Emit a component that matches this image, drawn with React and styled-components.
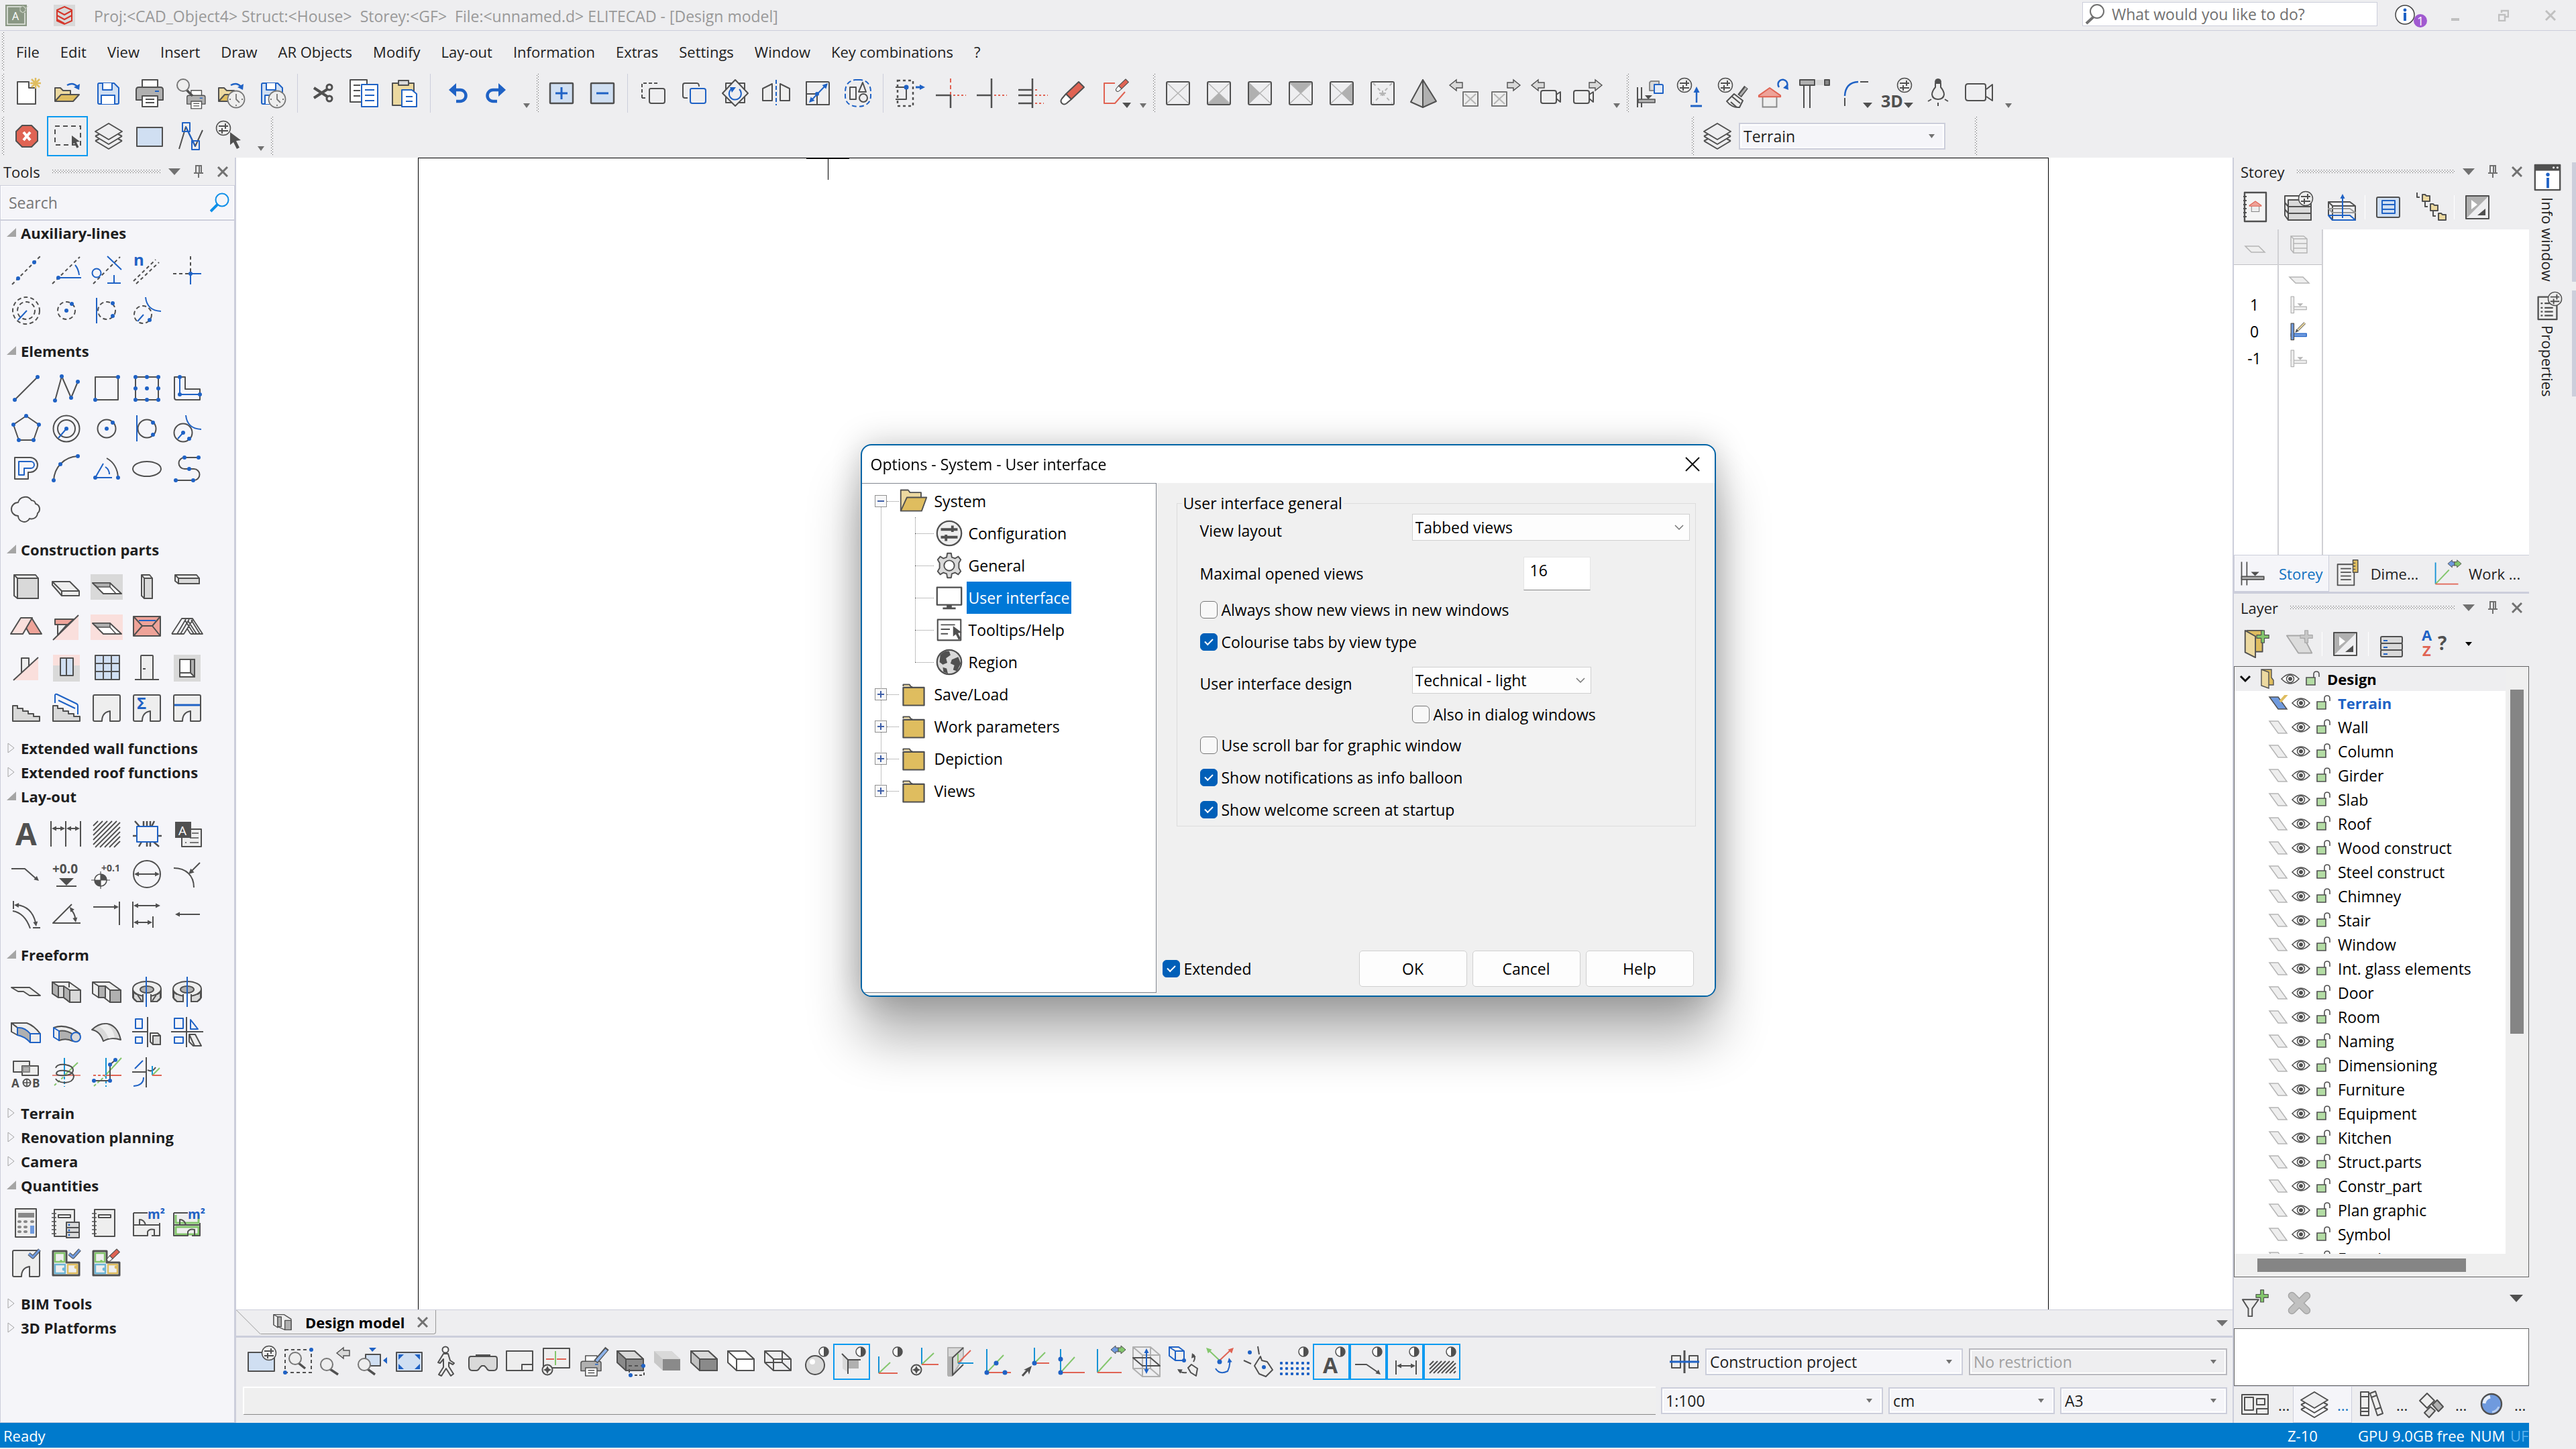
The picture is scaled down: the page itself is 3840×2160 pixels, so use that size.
import React, { Fragment, createElement, useState } from 'react';
import styled, { createGlobalStyle, css } from 'styled-components';

/* ---------- palette ---------- */
const K = '#505050';
const B = '#1f62c5';
const SKY = '#d0dff2';
const R = '#e06353';
const ROSE = '#eea399';
const BLUSH = '#fadfdc';
const G1 = '#eeeeee';
const G2 = '#d9d9d9';
const G3 = '#b0b0b0';
const Y1 = '#ecd9a0';
const Y2 = '#dfbd5f';
const GR = '#83c66c';
const CY = '#1592d6';
const LINE = '#cccedb';
const CHROME = '#eeeef0';
const PANEL = '#f5f5f9';

/* ---------- drawing helpers ---------- */
const g = (...els) => createElement(Fragment, null, ...els);
const l = (d, s = K, f = 'none', w = 2) => (
  <path d={d} stroke={s} fill={f} strokeWidth={w} strokeLinejoin="round" />
);
const fl = (d, f = K) => <path d={d} fill={f} />;
const da = (d, s = K, p = '5 4', w = 2) => (
  <path d={d} stroke={s} fill="none" strokeWidth={w} strokeDasharray={p} />
);
const ci = (x, y, r, s = K, f = 'none', w = 2) => (
  <circle cx={x} cy={y} r={r} stroke={s} fill={f} strokeWidth={w} />
);
const dots = (pts, r = 3) => (
  <g fill={B}>
    {pts.split(' ').map((p) => {
      const [x, y] = p.split(',');
      return <circle key={p} cx={x} cy={y} r={r} />;
    })}
  </g>
);
const head = (x, y, a, c = K, s = 7) => (
  <path d={`M0 0L${-s} ${-s / 2}V${s / 2}Z`} fill={c} transform={`translate(${x} ${y}) rotate(${a})`} />
);
const tx = (x, y, t, size, c = K, w = 700) => (
  <text x={x} y={y} fontSize={size} fill={c} fontWeight={w}>{t}</text>
);
const cfg = (x, y, r = 10.5) =>
  g(
    ci(x, y, r, K, G1, 1.5),
    l(`M${x - 7} ${y - 3}H${x + 7}M${x - 7} ${y + 4}H${x + 7}M${x + 3} ${y - 7}V${y + 1}M${x - 2} ${y}V${y + 8}`, K, 'none', 2)
  );
const clock = (x, y) =>
  g(ci(x, y, 12.5, '#777', G1, 1.8), l(`M${x} ${y - 8}V${y}L${x + 5} ${y + 5}M${x - 10} ${y}h2M${x + 10} ${y}h-2M${x} ${y + 10}v-2`, '#777', 'none', 1.8));
const half = (x = 37, y = 9) =>
  g(ci(x, y, 7, K, '#fff', 1.5), fl(`M${x} ${y - 7}A7 7 0 0 1 ${x} ${y + 7}Z`));
const lens = (x, y, ex, ey) => g(l(`M${x + 5} ${y + 7}L${ex} ${ey}`, K, 'none', 3.5), ci(x, y, 9, '#777', G1, 2));
const compass = (x, y) => g(ci(x, y, 7.5, K, G1, 2), fl(`M${x} ${y - 6}l2 4 4 2-4 2-2 4-2-4-4-2 4-2Z`));
const axes = (x, y, up, gx, gy, rx) =>
  g(l(`M${x} ${y}V${up}`, CY), l(`M${x} ${y}L${gx} ${gy}`, GR), l(`M${x} ${y}H${rx}`, R));
const fArrow = (x, y, dir, f = G2) => (
  <path d="M0 0L10 -8V-4H19V4H10V8Z" fill={f} stroke={K} strokeWidth="1.4" transform={`translate(${x} ${y}) scale(${dir} 1)`} />
);
const rubber = (t) => (
  <g transform={t} strokeLinejoin="round">
    <path d="M0 0L8 8L-11 26L-19 18Z" fill={R} stroke={K} strokeWidth="2" />
    <path d="M-19 18L-11 26L-18 32Q-22 35 -25 32Q-28 29 -25 25Z" fill="#fff" stroke={K} strokeWidth="2" />
  </g>
);
const dropTri = fl('M34 38H48L41 46Z');
const swap = (x, y) =>
  g(
    l(`M${x} ${y - 3}H${x - 4}V${y - 6}L${x - 11} ${y}L${x - 4} ${y + 6}V${y + 3}H${x}Z`, K, '#6f9ade', 1),
    l(`M${x} ${y - 3}H${x + 4}V${y - 6}L${x + 11} ${y}L${x + 4} ${y + 6}V${y + 3}H${x}Z`, K, GR, 1)
  );
const house = (x, y, s) => (
  <g transform={`translate(${x} ${y}) scale(${s})`}>
    <path d="M-11 12V30H11V12" fill={G1} stroke="#888" strokeWidth="2" />
    <path d="M-17 12L0 0L17 12V14H-17Z" fill={ROSE} stroke={R} strokeWidth="2" strokeLinejoin="round" />
  </g>
);

const floppy = g(l('M8 11Q8 9 10 9H32L39 16V38Q39 40 37 40H10Q8 40 8 38Z', B, SKY), l('M15 9V19H29V9M13 40V27H33V40', B, '#fff'));
const folderOpen = g(
  l('M5 36V16H13L17 20H28V26', K, Y1),
  l('M5 36L14 26H41L32 36Z', K, Y2)
);
const folderArrow = g(l('M23 12Q32 7 38 14', B, 'none', 2.5), fl('M41 19L42 10L33 15Z', B));
const printer = g(
  l('M13 15V4H36V15', K, '#fff'),
  l('M8 15H40Q44 15 44 19V34H4V19Q4 15 8 15Z', K, G3),
  l('M13 28H36V44H13Z', K, '#fff'),
  l('M18 33H31M18 38H31', K),
  l('M32 21H38', B)
);
const cube = (f1, f2, f3, s = K) =>
  g(
    l('M4 8H30L43 20V37H17L4 25Z', s, f2),
    l('M4 8H30L43 20H17Z', s, f1),
    l('M17 20H43V37H17Z', s, f3)
  );
const boxBase = (extra, stroke = '#b5b5b5') =>
  g(l('M8 9L40 39M40 9L8 39', stroke, 'none', 1.5), extra, l('M9 7H39Q41 7 41 9V39Q41 41 39 41H9Q7 41 7 39V9Q7 7 9 7Z', K));
const smallBox = (x) =>
  g(l(`M${x} 22H${x + 22}V43H${x}Z`, '#777', G1), l(`M${x + 3} 25L${x + 19} 40M${x + 19} 25L${x + 3} 40`, '#b5b5b5'));
const cam = (x, y) =>
  g(l(`M${x + 23} ${y + 6}L${x + 29} ${y + 2}V${y + 17}L${x + 23} ${y + 12}`, K, G1), l(`M${x + 3} ${y}H${x + 20}Q${x + 23} ${y} ${x + 23} ${y + 3}V${y + 16}Q${x + 23} ${y + 19} ${x + 20} ${y + 19}H${x + 3}Q${x} ${y + 19} ${x} ${y + 16}V${y + 3}Q${x} ${y} ${x + 3} ${y}Z`, K, G1));
const layers = g(
  l('M4 31L24 43L44 31M4 31L10 28M44 31L38 28'),
  l('M4 24L24 36L44 24M4 24L10 21M44 24L38 21'),
  l('M24 5L44 17L24 29L4 17Z', K, CHROME)
);
const pointer = (x, y, s = 1) => (
  <path d="M0 0L16 12L9 13L14 23L10 25L5 15L0 19Z" fill={K} transform={`translate(${x} ${y}) scale(${s})`} />
);
const opening = (bg) =>
  g(
    fl('M0 5H48V43H0Z', bg),
    l('M3 18H29L46 34H19Z', K, '#fff'),
    l('M3 18H29V24H10Z', K, G3, 1.6),
    l('M29 24L38 34', K, 'none', 1.6)
  );
const room = l('M6 5H42Q44 5 44 7V42Q44 44 42 44H29V29Q17 31 17 44H6Q4 44 4 42V7Q4 5 6 5Z', K, G1);
const stairs = l('M4 21H11V25H19V29H27V33H35V37H44V44H4Z', K, G2);
const ring = g(
  l('M3 20V32Q5 36 9 38H18V28M45 20V32Q43 36 39 38H30V28', K, G1),
  l('M18 27H8L4 24V33L9 38H18ZM30 27H40L44 24V33L39 38H30Z', K, G2),
  <ellipse cx="24" cy="19" rx="21" ry="11" fill={G1} stroke={K} strokeWidth="2" />,
  <ellipse cx="24" cy="20" rx="10" ry="5" fill={G3} stroke={K} strokeWidth="2" />,
  fl('M17 28H31V34H17Z', PANEL),
  l('M18 27V38M30 27V38', K)
);
const book = g(l('M8 4H38V44H8Z', K, G1), l('M4 10H11M4 16H11M4 22H11M4 28H11M4 34H11M4 40H11', K, 'none', 1.6), l('M14 12H32V16H14Z', K, '#fff'));
const plan3 = g(
  l('M4 6H24V23H43V42H4Z', K, G1, 3),
  l('M7 9H21V22H7Z', GR, G1, 2.4),
  l('M7 26H22V39H7Z', '#6cb5d6', G1, 2.4),
  l('M26 26H40V39H26Z', Y2, G1, 2.4),
  ci(16, 21, 2, 'none', GR),
  ci(20, 33, 2.4, 'none', '#6cb5d6'),
  ci(38, 30, 2.4, 'none', Y2)
);
const tick = l('M28 10L34 15L44 4', K, 'none', 5);
const tickBlue = l('M28 10L34 15L44 4', '#6f9ade', 'none', 3);
const house2 = g(l('M4 9H25M43 24V43H31M4 9V43H25V37Q28 32 35 34V43M4 27H43M13 27V19Q20 19 22 27', K, 'none'));
/* diagonal strokes, each one trimmed to the given rectangle */
const hatch = (x0, y0, x1, y1, step) => {
  const h = y1 - y0;
  let d = '';
  for (let a = x0 - h + step; a < x1; a += step) {
    const sx = Math.max(a, x0);
    const ex = Math.min(a + h, x1);
    if (ex - sx > 2) d += `M${sx} ${y1 - (sx - a)}L${ex} ${y1 - (ex - a)}`;
  }
  return d;
};

/* ---------- icon library (48 x 48) ---------- */
const ICONS = {
  fileNew: g(l('M10 7H27V16H37V40H10Z', K, '#fff'), l('M37 1V17M29 9H45M31 3L43 15M43 3L31 15', Y2, 'none', 2.5)),
  open: g(folderOpen, folderArrow),
  save: floppy,
  print: printer,
  preview: g(<g transform="translate(16 17) scale(0.68)">{printer}</g>, lens(13, 12, 27, 28)),
  openRecent: g(folderOpen, folderArrow, clock(31, 33)),
  saveTimed: g(floppy, clock(31, 33)),
  cut: g(l('M10 16L30 29M10 31L30 18', K, 'none', 4), ci(33, 15, 4, K, 'none', 3), ci(33, 32, 4, K, 'none', 3)),
  copy: g(
    l('M3 4H28V37H3Z', K, '#fff'), l('M8 12H18M8 20H18M8 28H18'),
    l('M20 11H44V44H20Z', B, '#fff'), l('M25 19H39M25 27H39M25 35H39', B)
  ),
  paste: g(l('M5 9H37V42H5Z', K, Y1), l('M14 5H29V12H14Z', K, G2), l('M19 19H34L41 25V44H19Z', B, '#fff'), l('M25 29H35M25 36H35', B)),
  undo: g(l('M20 19H30A8 8 0 0 1 30 36H24', B, 'none', 4.5), fl('M13 19L24 9V29Z', B)),
  redo: g(l('M28 19H18A8 8 0 0 0 18 36H24', B, 'none', 4.5), fl('M37 19L26 9V29Z', B)),
  plus: g(l('M8 9H40Q41 9 41 10V38Q41 39 40 39H8Q7 39 7 38V10Q7 9 8 9Z', K, SKY, 2.5), l('M24 15V33M15 24H33', B, 'none', 3)),
  minus: g(l('M8 9H40Q41 9 41 10V38Q41 39 40 39H8Q7 39 7 38V10Q7 9 8 9Z', K, SKY, 2.5), l('M15 24H33', B, 'none', 3)),
  dupSel: g(da('M7 31V9H31', K, '5 3'), da('M7 31H16'), l('M20 17H38Q41 17 41 20V36Q41 39 38 39H21Q18 39 18 36V19Q18 17 20 17Z', K, CHROME)),
  dup: g(l('M14 31H10Q7 31 7 28V12Q7 9 10 9H28Q31 9 31 14', K), l('M20 17H38Q41 17 41 20V36Q41 39 38 39H21Q18 39 18 36V19Q18 17 20 17Z', B, CHROME)),
  rotate: g(l('M10 9H38V38H10Z', K), l('M24 4L43 24L24 43L5 24Z', K, CHROME), l('M19 17A9 9 0 1 0 30 18', B), fl('M16 15H25L19 23Z', B)),
  mirror: g(l('M4 35V17L18 10V35Z', K, G1), l('M44 35V17L30 10V35Z', K, G1), da('M24 4V42', B, '6 3')),
  scale: g(l('M8 7H40Q42 7 42 9V41H8Z'), l('M8 25H24V41', K), l('M14 36L37 12', B), head(40, 9, -46, B, 8), head(12, 38, 134, B, 8), dots('24,25')),
  group: g(da('M24 4H28Q43 6 43 22V28Q43 43 24 44Q5 43 5 28V22Q5 6 20 4Z', B, '7 4'), l('M12 15H21V33H12ZM31 8L36 22H25Z', K), ci(32, 31, 6)),
  stretch: g(da('M7 5H30V43H7Z', K, '4 4', 2.5), l('M4 15H20V33H4'), dots('20,15', 3.5), l('M34 15H42', B, 'none', 3), head(48, 15, 0, B, 8)),
  trim1: g(l('M3 27H25V46', K, 'none', 2.5), da('M25 2V26', R, '6 4'), da('M29 27H48', R, '3 3')),
  trim2: g(l('M3 27H25M25 2V46', K, 'none', 2.5), da('M29 27H48', R, '3 3')),
  trim3: g(l('M4 19H25M4 27H25M4 39H25M25 2V46', K, 'none', 2.5), da('M29 27H48M29 39H42M29 19H34', R, '3 3')),
  eraser: rubber('translate(33 7)'),
  eraseSeg: g(l('M26 9H10V39H26L41 22', R), rubber('translate(42 3) scale(0.55)'), fl('M37 38H50L44 46Z')),
  vPlain: boxBase(null),
  vBottom: boxBase(fl('M24 24L40 40H8Z', G3)),
  vLeft: boxBase(fl('M24 24L8 40V8Z', G3)),
  vTop: boxBase(fl('M24 24L40 8H8Z', G3)),
  vRight: boxBase(fl('M24 24L40 40V8Z', G3)),
  vIso: g(da('M10 9L38 39M38 9L10 39', '#b5b5b5', '5 5'), l('M19 24H29M24 20V28', '#b5b5b5'), l('M9 7H39Q41 7 41 9V39Q41 41 39 41H9Q7 41 7 39V9Q7 7 9 7Z', K)),
  pyramid: g(l('M23 4L5 37L23 45Z', K, G2), l('M23 4L43 36L23 45Z', K, G3)),
  boxPrev: g(smallBox(22), fArrow(2, 12, 1)),
  boxNext: g(smallBox(4), fArrow(46, 12, -1)),
  camPrev: g(cam(16, 20), fArrow(2, 12, 1)),
  camNext: g(cam(4, 20), fArrow(46, 12, -1)),
  wallCopy: g(
    l('M3 15V45M9 15V45', K, 'none', 2), l('M4 33H29V38H4Z', K, G3, 1.6), fl('M14 27H25L19 33Z'),
    l('M23 6H35V20H21V8Z', '#888', G2), l('M28 11H39Q41 11 41 13V24H28Z', B, '#e3ebf8')
  ),
  cfgUp: g(cfg(12, 12), l('M30 38V20', B, 'none', 2.5), head(30, 14, -90, B, 9), l('M21 43H38', B, 'none', 3)),
  cfgBrush: g(cfg(12, 12), l('M43 15L33 28', K, 'none', 7), l('M43 16L34 27', G3, 'none', 3), l('M25 25L38 35L33 45Q22 46 14 36Z', K, G1), l('M22 29L34 39M20 37L29 45', K)),
  houseTurn: g(house(17, 16, 0.95), l('M31 15A7 7 0 1 1 41 16', B, 'none', 2.5), fl('M44 10L45 19L37 16Z', B)),
  column: g(fl('M1 4H23V12H1Z', G3), l('M1 4H23V12H1Z'), fl('M25 4H36V12H25Z', G2), l('M38 4H45V12H38Z', K, '#888'), l('M7 12V46M16 12V46')),
  fillet: g(l('M7 28Q8 8 27 7', B, 'none', 2.5), l('M30 7H42M7 31V43'), dropTri),
  view3d: g(tx(0, 45, '3D', 25), cfg(35, 12), dropTri),
  lamp: g(fl('M19 8Q19 2 24 2Q29 2 29 8Z'), l('M20 9H28V15Q33 21 33 26Q32 33 24 33Q16 33 15 26Q15 21 20 15Z', K, G1), l('M24 38V43M14 33L9 36M34 33L39 36')),
  video: g(l('M35 18L44 11V35L35 29', K), l('M8 10H31Q34 10 34 13V32Q34 35 31 35H8Q4 35 4 31V14Q4 10 8 10Z', K)),

  cancel: g(l('M17 8H31L40 17V31L31 40H17L8 31V17Z', K, R), l('M19 18L29 30M29 18L19 30', '#fff', 'none', 4)),
  pick: g(da('M5 9H43V37H5Z', K, '7 5'), pointer(30, 23, 0.75)),
  layers,
  area: l('M5 11H43V39H5Z', K, SKY),
  poly: g(l('M7 43L17 10L31 39L42 15'), l('M17 10L31 39', B), l('M12 4H23V17H12ZM26 31H37V44H26Z', B)),
  cfgPick: g(cfg(12, 12), pointer(22, 18, 1)),

  auxLine: g(da('M3 45L45 3'), dots('12,36 36,12')),
  auxAngle: g(da('M3 44L44 4'), l('M12 35H46M37 16Q42 22 43 31', B), dots('12,35')),
  auxPerp: g(da('M4 44L44 4'), l('M25 3L46 23M25 43H45M35 31V43', B), ci(9, 28, 6.5, B)),
  auxPar: g(tx(4, 17, 'n', 24, B), da('M4 40L37 8M8 44L42 12')),
  auxCross: g(da('M3 29H28M29 3V28'), l('M29 45V29H45', B), dots('29,29')),
  auxRings: g(<g strokeDasharray="6 4">{ci(24, 24, 20)}{ci(24, 24, 13)}</g>, l('M25 24L12 38', B)),
  auxCircle: g(<g strokeDasharray="6 4">{ci(24, 24, 13)}</g>, dots('24,24 32,14')),
  auxTan: g(<g strokeDasharray="6 4">{ci(24, 24, 13)}</g>, l('M9 5V43', B), dots('33,13 33,32')),
  auxArc: g(<g strokeDasharray="6 4">{ci(18, 30, 13)}</g>, l('M22 4Q24 24 45 25M19 30L10 40', B), dots('28,38')),

  line: g(l('M7 41L41 7'), dots('7,41 41,7')),
  pline: g(l('M7 42L17 6L31 38L41 14'), dots('7,42 17,6 31,38 41,14')),
  rect: g(l('M7 7H41V41H7Z'), dots('7,41 41,7')),
  rect9: g(l('M7 7H41V41H7Z'), dots('7,7 24,7 41,7 7,24 24,24 41,24 7,41 24,41 41,41')),
  lshape: g(l('M5 7H21V25H43V41H8Q5 41 5 38Z'), l('M13 7V33H43', B), dots('13,7 13,33 43,33')),
  penta: g(l('M24 5L43 18L35 41H13L5 18Z'), dots('24,5 43,18 35,41 13,41 5,18')),
  rings: g(ci(24, 24, 19.5), ci(24, 24, 13), l('M24 24L12 38', B), dots('24,24')),
  circle: g(ci(24, 24, 13.5), dots('24,24 33,15')),
  circleTan: g(ci(24, 24, 13.5), l('M9 4V43', B), dots('33,15 33,33')),
  circleArc: g(ci(18, 30, 13.5), l('M22 4Q24 24 45 25M18 30L10 39', B), dots('18,30 27,39')),
  pshape: g(l('M7 7H30A11 11 0 0 1 30 29H27V39H7Z'), l('M13 13H31A5 5 0 0 1 31 23H21V33H13Z', B)),
  arc: g(l('M5 41C6 22 20 6 41 5'), dots('5,41 15,17 41,5')),
  arcAngle: g(l('M24 8Q40 17 41 37'), l('M19 16L7 37H32M22 21Q28 25 28 32', B), dots('7,37 41,37')),
  ellipse: <ellipse cx="24" cy="24" rx="21" ry="11" fill="none" stroke={K} strokeWidth="2" />,
  spline: g(l('M41 7H20A8.5 8.5 0 0 0 20 24H34A8.5 8.5 0 0 1 34 41H7'), dots('41,7 20,7 27,24 33,41 7,41')),
  cloud: l('M12 14A11 11 0 0 1 32 11A6 6 0 0 1 38 16A8 8 0 0 1 41 30A9 9 0 0 1 29 38A9 9 0 0 1 12 34A10 10 0 0 1 12 14Z'),

  wall: g(l('M6 6H38L42 11V41H11L6 37Z', K, G1), l('M6 6L11 11V41M11 11H42', K), l('M11 11H42V41H11Z', K, G2)),
  slab: g(l('M3 16H29L43 30V37H17L3 21Z', K, G1), l('M3 16L17 30H43M17 30V37')),
  opening: opening(G2),
  pillar: g(l('M16 6H28L32 11V41H20L16 37Z', K, G1), l('M16 6L20 11'), l('M20 11H32V41H20Z', K, G2)),
  beam: g(l('M6 6H38L42 11V19H11L6 15Z', K, G1), l('M6 6L11 11'), l('M11 11H42V19H11Z', K, G2)),
  roof: g(l('M32 10L47 34H29L24 25Z', K, ROSE), l('M1 34L16 10H33L19 34Z', K, BLUSH)),
  roofEdge: g(fl('M4 43H42V6Z', BLUSH), l('M11 20V36L25 20Z', K, G1), l('M7 12H35L26 20H7Z', K, ROSE), l('M4 43L42 6')),
  roofOpening: opening(BLUSH),
  hip: g(l('M4 8H44V37H4Z', K, ROSE), l('M4 8L17 22H32L44 8M17 22L4 37M32 22L44 37', K), l('M12 14H37', B)),
  rafters: g(l('M1 34L16 11H32L47 34H38L25 14M1 34H19L33 12M9 34L22 12M14 34L27 12M29 34L24 26M34 34L21 14M29 34H43L30 13', K, 'none', 1.8)),
  chimney: g(fl('M5 43H42V9Z', BLUSH), l('M17 32V10H28V23', K, G1), l('M5 43L42 9')),
  window: g(fl('M4 5H44V21H4Z', BLUSH), fl('M4 21H44V45H4Z', G2), l('M15 10H34V36H15ZM24 10V36', K, SKY)),
  glass: g(l('M7 6H43V42H7Z', K, SKY), l('M19 6V42M31 6V42M7 18H43M7 30H43')),
  door: g(l('M15 42V7Q15 6 16 6H32Q33 6 33 7V42', K, G1), l('M6 42H42M18 26H22')),
  niche: g(fl('M4 5H44V45H4Z', G2), l('M13 12H35V38H13Z', K, '#fff'), l('M29 12V32L35 38V12Z', K, G3), l('M13 32H29')),
  stairs,
  railing: g(stairs, l('M7 17V5Q8 3 10 4L39 18Q41 19 41 21V34M12 13L37 25', B)),
  room,
  roomSum: g(room, tx(9, 26, 'Σ', 24, B)),
  roomBand: g(room, l('M5 20H43', B, 'none', 3)),

  text: tx(8, 41, 'A', 46),
  dims: g(l('M1 5V43M23 5V43M45 5V43M5 16H19M27 16H41'), head(2, 16, 180), head(22, 16, 0), head(24, 16, 180), head(44, 16, 0)),
  hatch: l(hatch(4, 5, 44, 44, 7), K, 'none', 1.8),
  detail: g(l('M6 5L13 13M19 5V13M24 5V13M29 5V13M35 5L31 13M12 43L16 36M24 43V36M29 43V36M34 36L42 43M3 27H9M40 27H46', K, 'none', 2.5), l('M9 13H40V36H9Z', B, PANEL)),
  label: g(l('M16 17H45V43H16Z', K, G1), l('M31 23H41M28 30H41M28 37H41M21 37H23', K, 'none', 1.6), fl('M6 6H30V30H6Z'), tx(11, 26, 'A', 19, '#fff', 400)),
  leader: g(l('M2 16H22L39 31'), head(43, 34, 40)),
  level: g(tx(3, 23, '+0.0', 19), fl('M13 30H35L24 41Z'), l('M9 42H39')),
  levelPoint: g(tx(16, 20, '+0.1', 14), ci(15, 33, 9, K, '#fff', 1.6), fl('M15 33V24A9 9 0 0 1 24 33ZM15 33V42A9 9 0 0 1 6 33Z'), l('M1 33H29M15 20V46', K, 'none', 1.2)),
  diameter: g(ci(24, 24, 20), l('M9 24H39'), head(5, 24, 180), head(43, 24, 0)),
  radius: g(l('M4 15C22 15 34 26 34 44M43 7L30 20'), head(26, 24, 138, K, 8)),
  arcDim: g(l('M4 19Q22 22 30 45M10 10Q32 12 38 36M5 4V16M34 44H45'), head(6, 10, 185), head(39, 42, 80)),
  angleDim: g(l('M32 9L4 37H45M31 17Q37 24 37 30'), head(29, 13, 235), head(38, 36, 80)),
  endDim: g(l('M4 13H36M43 5V40'), head(42, 13, 0)),
  baseDim: g(l('M3 5V44M8 11H38M8 36H27M33 27V44'), head(4, 11, 180), head(44, 11, 0), head(4, 36, 180), head(32, 36, 0)),
  arrow: g(l('M12 24H43'), head(6, 24, 180)),

  face: l('M2 17H29L45 29H29L20 23H12Z', K, G1),
  extrudeOpen: g(l('M3 9H28L45 21V39H29L20 32H12L3 26Z', K, G1), l('M3 9L12 15V32L3 26Z', K, G3), l('M12 15H20V32H12Z', K, G2), l('M20 15L29 21V39L20 32Z', K, G3), l('M29 21H45V39H29Z', K, G2), l('M28 9V17')),
  extrude: g(l('M3 9H28L45 21V39H29L20 32H12L3 26Z', K, G1), l('M12 15H22V32H12Z', K, G3), l('M3 9L12 15H22L29 21V39M22 15V32'), l('M29 21H45V39H29Z', K, G3)),
  revolveOpen: g(ring, l('M10 28L16 37M38 28L32 37', K), l('M23 1V46', B)),
  revolve: g(ring, l('M24 1V46', B)),
  sweep: g(l('M2 10H25Q36 14 45 26H30Q22 18 11 17Z', K, G1), l('M2 10L11 17V28L2 23Z', K, G1), l('M11 17Q22 16 30 26V39Q22 30 11 28Z', B, G3), l('M30 26H45V39H30Z', B, G1)),
  loft: g(l('M5 17Q24 10 44 26L36 34Q24 24 12 25Z', K, G1), l('M12 22Q24 20 34 27L33 37Q24 32 13 36Z', K, G3), l('M5 17L13 22V36L5 31Z', B, G1), ci(38, 31, 7, B, G2)),
  surface: g(l('M2 20Q12 10 24 11Q40 13 45 35Q30 30 19 37Q14 22 2 20Z', K, G2), fl('M13 15Q20 11 25 12Q34 19 36 32Q31 32 27 33Q22 20 13 15Z', G1)),
  views2: g(l('M25 1V46M2 23H25'), l('M7 4H17V18H7ZM7 31H17V40H7Z', B), l('M29 25H40L44 29V42H33L29 38Z', K, G1), l('M33 29H44V42H33Z', K, G2)),
  views4: g(l('M23 1V46M0 23H48'), l('M5 3H18V18H5ZM5 31H18V40H5ZM29 5V19H40Z', B), l('M27 27H36L45 44H33L27 38Z', K, G1), l('M27 27L35 44')),
  boolean: g(l('M5 7H29V23H5Z', K, G1), l('M18 14H42V28H18Z', K, G1), l('M19 15H29V23H19Z', '#888', G3), tx(2, 46, 'A', 17), tx(33, 46, 'B', 17), ci(25, 39, 5.5), l('M20 39H31M25 34V45', K, 'none', 1.6)),
  helix: g(l('M3 28H45', R, 'none', 1.6), l('M21 2V29', CY), da('M21 30V45', CY, '4 3'), l('M21 28L41 9', GR), da('M6 43L20 30', GR, '4 3'), l('M8 17Q10 11 22 12Q34 14 34 20Q34 27 22 28Q9 29 9 25Q10 20 22 21Q35 23 35 30Q34 38 22 39Q10 38 8 33')),
  path3d: g(da('M4 28H23', R, '4 3'), l('M23 28H46', R), l('M23 2V28', CY), da('M23 29V45', CY, '4 3'), l('M24 26L46 2', GR), da('M5 44L22 29', GR, '4 3'), l('M5 36H29V12L37 5'), dots('5,36 29,36 29,12 37,5')),
  project: g(l('M23 1V46M2 23H23'), l('M6 18L18 6M4 44Q19 43 19 31', B), l('M25 20Q32 24 37 16'), l('M32 28V14', CY), l('M32 28L43 17', GR), l('M32 28H46', R)),

  calc: g(l('M8 3H39V45H8Z', K, G1), fl('M12 9H36V16H12Z', '#888'), <g fill="#888">{[14, 23].map((x) => [22, 30, 37].map((y) => <ellipse key={`${x}${y}`} cx={x} cy={y} rx="3" ry="2" />))}<ellipse cx="33" cy="22" rx="3" ry="2" /></g>, fl('M30 28H36V40H30Z', '#6f9ade')),
  bookDb: g(<g transform="translate(-2 0)">{book}</g>, l('M24 23H43V46H24ZM24 31H43M24 38H43', K, G2), dots('28,27 28,35 28,42', 1.4)),
  book: <g transform="translate(-2 0)">{book}</g>,
  areaM2: g(fl('M4 9H43V43H4Z', G1), house2, tx(25, 18, 'm²', 19, B)),
  areaGreen: g(fl('M4 9H43V43H4Z', G1), l('M7 12V24H41V12M7 30H41V41H7Z', GR, 'none', 3), house2, tx(25, 18, 'm²', 19, B)),
  roomCheck: g(room, tick, tickBlue),
  planCheck: g(plan3, tick, tickBlue),
  planErase: g(plan3, rubber('translate(39 3) scale(0.55)')),

  viewCfg: g(l('M4 10H43V38H4Z', K, SKY), cfg(35, 11)),
  zoomWin: g(da('M4 6H43V40H4Z', K, '5 4'), lens(19, 19, 34, 34), dots('43,6 4,40')),
  zoomPrev: g(lens(11, 28, 28, 43), fArrow(26, 11, 1)),
  zoomObj: g(l('M14 13H36V30H14Z', K, SKY), lens(12, 28, 28, 43), fl('M19 3H30L24 9ZM46 17V27L40 22Z', B)),
  zoomAll: g(l('M5 10H43V38H5Z', K, SKY), fl('M8 13H16L8 21ZM40 13H32L40 21ZM8 35H16L8 27ZM40 35H32L40 27Z', B)),
  walk: g(ci(23, 6, 4.5, K, '#fff'), l('M20 12H27L30 22L36 26L34 28L28 25L28 31L35 42L31 45L24 34L17 45L13 43L20 32V20L15 26L12 25Z', K, G1)),
  goggles: g(fl('M13 13H35V17H13Z'), l('M6 16H42Q45 16 45 20V31Q45 37 40 37H34Q31 37 29 33L26 30H22L19 33Q17 37 14 37H8Q3 37 3 31V20Q3 16 6 16Z', K, G2)),
  sheet: l('M4 8H43V37H4ZM27 37V28H43', K, G1),
  origin: g(l('M4 4H43V33H4Z', K, G1), l('M22 8V29', GR), l('M8 20H20M24 20H38', R, 'none', 2), compass(10, 36)),
  printArea: g(<g transform="translate(2 12) scale(0.75)">{printer}</g>, l('M44 4L27 24', K, 'none', 7), l('M43 6L28 23', '#8db3ea', 'none', 4)),
  cubeDash: g(cube(G2, '#8a8a8a', '#8a8a8a'), da('M22 40V30H43', K, '5 4'), dots('43,30 24,44'), da('M30 44H44V40', K, '4 3')),
  cubeShade: cube(G2, '#c8c8c8', '#8a8a8a', 'none'),
  cubeLine: cube(G2, '#c0c0c0', '#8a8a8a'),
  cubeHidden: cube('#fff', '#fff', '#fff'),
  cubeWire: g(l('M4 8H30L43 20V37H17L4 25ZM4 8L17 20H43M17 20V37M4 25H30L43 37M30 8V25')),
  sphere: g(ci(24, 29, 14, K, G2), ci(20, 24, 4, 'none', '#fff'), half()),
  corner: g(fl('M10 12L18 22V40L10 34Z', G2), fl('M18 22H34V34H18Z', G3), l('M9 12L18 21V42M18 21H37', K), half()),
  axisSmall: g(axes(9, 41, 16, 26, 25, 37), half()),
  axisOrigin: g(axes(18, 28, 3, 36, 11, 43), compass(10, 36)),
  axisWall: g(l('M2 3H25V18L9 44H2Z', G3, G2), fl('M2 16H9V46H2Z', G3), l('M25 3L9 18V44L25 28', K), l('M17 26V12', GR), l('M17 26L36 7', R), l('M17 26H40', CY)),
  axis3: g(axes(5, 40, 5, 30, 14, 41), dots('5,40 19,26 32,40', 3.5)),
  axisPick: g(axes(21, 26, 3, 37, 10, 43), dots('21,26', 3.5), l('M3 45L11 36', K, 'none', 3), fl('M17 30L5 36L11 37L13 43Z')),
  axis2: g(axes(5, 40, 5, 26, 17, 41), dots('5,40 5,20', 3.5)),
  axisSwap: g(axes(5, 40, 5, 26, 17, 41), swap(36, 6)),
  slice: g(l('M3 2H29L43 14V46H17L3 34ZM3 2L17 14H43M17 14V46M3 34H29L43 46M29 2V34', G3), l('M3 18H29L43 30H17Z'), l('M23 8V38', B), head(23, 4, -90, B), head(23, 42, 90, B)),
  cubeGizmo: g(l('M2 2H16L24 8V22H11L2 15ZM2 2L11 8H24M11 8V22', B), dots('24,22'), l('M35 28L44 34L42 45L34 40L30 33Z', K, G1), l('M38 24Q42 18 38 13M28 40Q20 41 16 37'), head(36, 11, -110), head(14, 35, 210)),
  axisArc: g(l('M22 22L4 5', GR), l('M22 22L40 5', R), head(2, 3, -135, GR, 8), head(43, 3, -45, R, 8), dots('22,24', 3.5), l('M16 34Q22 44 34 38Q38 30 37 22', B), head(36, 18, -100, B)),
  tag: g(l('M24 1L26 13M3 22L14 27', K), dots('12,10'), l('M28 16L24 22L19 30L26 42L36 46L46 36L38 24L30 22Z', K, G1), dots('33,32')),
  grid: g(<g fill={B}>{[26, 34, 42].map((y) => [4, 12, 20, 28, 36, 44].map((x) => <rect key={`${x}-${y}`} x={x - 2} y={y - 2} width="4" height="4" rx="1" />))}</g>, half()),
  dText: g(tx(11, 41, 'A', 32), half()),
  dLead: g(l('M4 28H21L37 39'), head(42, 43, 40), half()),
  dDim: g(l('M10 22V43M40 22V43M15 30H35'), head(11, 30, 180), head(39, 30, 0), half()),
  dHatch: g(l(hatch(5, 23, 44, 41, 6), K, 'none', 2), half()),

  storeyBook: g(l('M8 2H40V45H8Z', K, '#f4f4f4', 2.4), l('M6 8H11M6 14H11M6 20H11M6 26H11M6 32H11M6 38H11'), house(24, 15, 0.52)),
  storeyCfg: g(l('M3 7H34L42 13V43H8L3 36Z', K, G1), l('M8 13H42V43H8Z', K, G2), l('M3 17L8 23H42M3 27L8 33H42'), cfg(34, 11)),
  storeyUp: g(l('M3 16H35L43 22V43H9L3 36ZM3 16L9 22H43M9 22V43'), l('M3 26H35L43 32H9Z', '#999'), l('M3 36H35L43 43H9Z', B), l('M24 40V10', B), head(24, 4, -90, B)),
  storeyList: g(l('M9 9H39Q41 9 41 11V37Q41 39 39 39H9Q7 39 7 37V11Q7 9 9 9Z', K, SKY), l('M15 14H34V33H15ZM15 20H34M15 27H34', B)),
  storeyTree: g(...[[2, 2], [14, 16], [26, 30]].map(([x, y]) => g(l(`M${x} ${y}V${y + 7}H${x + 4}`), l(`M${x + 8} ${y + 3}h4l2 2h5v8h-11Z`, K, Y1)))),
  contrast: g(fl('M7 7H41L7 41Z', G3), fl('M15 13L24 20L15 27Z', '#fff'), fl('M36 26V36H24Z'), l('M7 7H41V41H7Z', K)),
  storey: g(l('M4 4V44M13 4V44'), l('M4 29H42V34H4Z', K, G3), fl('M20 21H34L27 28Z')),
  storeyDim: g(l('M4 29H42V36H13', '#b5b5b5', G1), l('M5 5V44H12V5Z', '#b5b5b5', G1), fl('M20 21H34L27 28Z', '#b5b5b5')),
  storeyActive: g(l('M5 29H42V36H5Z', B, '#6f9ade', 2), l('M5 5V44H12V5Z', K, '#6f9ade', 2), l('M22 20L38 4', K, 'none', 6), l('M22 20L38 4', Y1, 'none', 3.5), fl('M15 27L18 18L24 23Z')),
  dimensions: g(l('M5 9H32V43H5Z', K, G1), l('M10 16H27M10 22H27M10 28H27M10 34H27'), l('M30 2H38V22H30Z', K, Y2, 1.6), l('M30 7H34M30 12H34M30 17H34', K, 'none', 1.4)),
  workAxes: g(axes(5, 41, 6, 27, 18, 42), swap(36, 8)),
  layerNew: g(l('M8 3H33V36H22', K, Y2), l('M6 3L22 12V45L6 37Z', K, Y1), l('M31 3H36V10H43V15H36V22H31V15H24V10H31Z', K, GR, 1.2)),
  planeNew: g(l('M3 11H28L42 38H21Z', '#a8a8a8', '#dcdcdc'), l('M31 3H36V10H43V15H36V22H31V15H24V10H31Z', '#a8a8a8', '#c8c8c8', 1.2)),
  server: g(...[13, 23, 33].map((y) => g(l(`M10 ${y}H38Q40 ${y} 40 ${y + 2}V${y + 8}Q40 ${y + 10} 38 ${y + 10}H10Q8 ${y + 10} 8 ${y + 8}V${y + 2}Q8 ${y} 10 ${y}Z`, K, G2), l(`M12 ${y + 6}H18`, B)))),
  sortAZ: g(tx(4, 19, 'A', 22, B), tx(5, 42, 'Z', 22, R), tx(28, 33, '?', 28)),
  filterNew: g(l('M3 19H28L18 33V45H12V33Z', K, G1), l('M31 4H36V11H43V16H36V23H31V16H24V11H31Z', K, GR, 1.2)),
  remove: g(
    <path d="M13 13L36 36M36 13L13 36" stroke="#a5a5a5" strokeWidth="12" strokeLinecap="round" />,
    <path d="M13 13L36 36M36 13L13 36" stroke="#c0c0c0" strokeWidth="9" strokeLinecap="round" />
  ),
  plot: g(l('M4 9H43V38H4Z', K, G1), l('M8 13H21V32H8ZM26 15H38V24H26ZM26 38V30H43', K)),
  library: g(l('M5 5H17V40H5ZM5 12H17M5 29H17M5 34H17', K, G1), l('M19 7L27 4L38 37L30 40ZM21 13L29 10M27 31L35 28', K, G1)),
  materials: g(l('M16 7L27 18L16 29L5 18Z', K, G1), l('M31 17L40 27L33 34L24 24Z', K, G3), l('M21 27L28 33L19 43L12 36Z', K, G2)),
  ball: g(ci(24, 23, 15, K, '#6f9ade', 2.4), l('M13 22Q14 14 22 12', '#e6eefb', 'none', 5), l('M35 27Q32 34 25 35', '#b8cef0', 'none', 3)),
  cut3: g(l('M5 15H18V33H5ZM31 15H44V33H31Z', K, G1), l('M24 7V41', K, 'none', 3), l('M2 24H46', B, 'none', 3)),
  infoWin: g(l('M4 4H43V43H4Z', K, '#fff', 2.4), fl('M4 4H43V13H4Z'), dots('24,19', 2.8), l('M24 24V40', B, 'none', 4), ci(33, 8, 1.6, 'none', '#fff'), ci(39, 8, 1.6, 'none', '#fff')),
  props: g(l('M9 10H38V45H9Z', K, G1, 2.4), l('M19 20H30M19 27H32M19 33H32M19 39H32M13 20H16M13 27H16M13 33H16M13 39H16', K, 'none', 2.5), cfg(35, 13)),
  model: g(l('M3 7H26L42 17V41H28L3 30Z', K, G1), l('M12 12V36L3 30V7Z', K, G1), l('M12 12H20V34H12Z', K, G3), l('M28 20H42V41H28Z', K, G3)),
  config: g(ci(24, 24, 19, K, G1, 2.4), l('M11 18H37M11 30H37M29 12V22M19 26V36', K, 'none', 4)),
  gear: g(
    l('M21 5H27L28 11L33 13L38 10L42 15L39 20V28L42 33L38 38L33 35L28 37L27 43H21L20 37L15 35L10 38L6 33L9 28V20L6 15L10 10L15 13L20 11Z', K, G2),
    ci(24, 24, 8, K, '#fff')
  ),
  screen: g(l('M5 8H43V35H5Z', K, '#fff', 2.4), fl('M20 35H28V39H34V42H14V39H20Z')),
  tips: g(l('M6 8H42V40H6Z', K, '#fff', 2.2), l('M11 16H33M11 23H25M11 30H22', K), pointer(30, 18, 0.85)),
  globe: g(ci(24, 24, 19, K, G2, 2.4), fl('M10 13Q16 6 24 7L26 13L19 18L21 25L14 28L9 24ZM28 20L38 16L42 26L36 38L30 36L32 29L26 26ZM14 32L20 34L22 42L15 39Z')),
  folder: g(l('M7 11V8H17L20 12H22', K, Y1), l('M7 13H41V42H7Z', K, Y2, 2.4)),
  folderBig: g(l('M3 40V6H15L18 10H36V18', K, Y1, 2), l('M3 40L13 18H45L37 40Z', K, Y2, 2)),
};

/* ---------- base ---------- */
const Global = createGlobalStyle`
  *, *::before, *::after { box-sizing: border-box; }
  body {
    margin: 0;
    background: ${CHROME};
    color: #1e1e1e;
    font: 23px/32px "Open Sans", "Noto Sans", "Liberation Sans", sans-serif;
    overflow: hidden;
  }
  button, input, select { font: inherit; color: inherit; }
  ul { list-style: none; margin: 0; padding: 0; }
`;
const Svg = styled.svg`
  width: ${(p) => p.$s || 48}px;
  height: ${(p) => p.$s || 48}px;
  flex: none;
  display: block;
  overflow: visible;
`;
const Icon = ({ n, s }) => (
  <Svg viewBox="0 0 48 48" $s={s} fill="none" aria-hidden="true">{ICONS[n]}</Svg>
);
const plainButton = css`
  border: 0;
  padding: 0;
  background: none;
  display: flex;
  align-items: center;
  justify-content: center;
`;

const App_ = styled.div`
  display: flex;
  flex-direction: column;
  height: 100vh;
  padding-bottom: 2px;
`;
const dotPattern = css`
  background-image: conic-gradient(from 270deg at 1px 1px, #666 90deg, transparent 0),
    conic-gradient(from 270deg at 1px 1px, #666 90deg, transparent 0);
  background-size: 4px 4px;
  background-position: 0 0, 2px 2px;
`;

/* ---------- title bar ---------- */
const TitleBar = styled.header`
  display: flex;
  align-items: center;
  height: 46px;
  flex: none;
  padding: 0 4px 0 8px;
  border-bottom: 1px solid ${LINE};
`;
const Logo = styled(Svg)`
  margin-right: ${(p) => p.$gap}px;
`;
const Title = styled.h1`
  margin: 0;
  flex: 1;
  font-size: 23px;
  font-weight: 400;
  line-height: 32px;
  color: #999;
  white-space: pre;
  padding-top: 2px;
`;
const AskBox = styled.label`
  display: flex;
  align-items: center;
  gap: 10px;
  width: 440px;
  height: 36px;
  padding-left: 3px;
  margin-right: 24px;
  margin-bottom: 3px;
  background: #fff;
  border: 1px solid ${LINE};
  input {
    flex: 1;
    border: 0;
    padding: 0;
    background: none;
    outline: 0;
    &::placeholder { color: #717171; opacity: 1; }
  }
`;
const WinButton = styled.button`
  ${plainButton}
  width: ${(p) => p.$w || 72}px;
  height: 40px;
`;

/* ---------- menu + toolbars ---------- */
const Bar = styled.div`
  display: flex;
  align-items: center;
  height: ${(p) => p.$h}px;
  flex: none;
  padding-left: 1px;
`;
const Grip = styled.span`
  width: 8px;
  height: 58px;
  flex: none;
  ${dotPattern}
  background-clip: content-box;
  padding: 0 2px;
`;
const MenuItem = styled.button`
  ${plainButton}
  padding: 0 16px 0 15px;
  height: 40px;
  font-size: 22px;
`;
const MenuList = styled.nav`
  display: flex;
`;
const Slot = styled.button`
  ${plainButton}
  width: ${(p) => p.$w || 61}px;
  height: ${(p) => p.$h || 60}px;
  flex: none;
  border: 2px solid ${(p) => (p.$on ? '#0b9af0' : 'transparent')};
`;
const Sep = styled.span`
  width: 1px;
  height: ${(p) => p.$h || 58}px;
  margin: 0 ${(p) => (p.$m === undefined ? 7 : p.$m)}px;
  background: ${(p) => p.$c || LINE};
  flex: none;
`;
const More = styled.button`
  ${plainButton}
  width: 27px;
  height: 58px;
  align-items: flex-end;
  padding-bottom: 7px;
  flex: none;
`;
const TinyTri = ({ w = 10, h = 7, c = '#717171' }) => (
  <svg width={w} height={h} viewBox="0 0 10 7" preserveAspectRatio="none" aria-hidden="true"><path d="M0 0H10L5 7Z" fill={c} /></svg>
);
const Spring = styled.span`
  flex: ${(p) => p.$g || 1};
`;
const ComboWrap = styled.span`
  display: grid;
  grid-template-columns: 1fr 38px;
  width: ${(p) => p.$w}px;
  height: 40px;
  flex: none;
  border: 2px solid ${(p) => (p.$off ? '#b9b9bf' : LINE)};
  background: ${(p) => (p.$off ? CHROME : PANEL)};
  box-shadow: inset 0 0 0 2px #fff;
  color: ${(p) => (p.$off ? '#a0a0a0' : '#1e1e1e')};
  select {
    grid-area: 1 / 1 / 2 / 3;
    appearance: none;
    border: 0;
    outline: 0;
    background: none;
    padding: 0 5px;
    opacity: 1;
    color: inherit;
  }
  > svg {
    grid-area: 1 / 2;
    place-self: center;
    pointer-events: none;
  }
`;
const Combo = ({ label, value, w, off }) => (
  <ComboWrap $w={w} $off={off}>
    <select aria-label={label} defaultValue={value} disabled={off}><option>{value}</option></select>
    <TinyTri w={9} h={6} />
  </ComboWrap>
);

const MENUS = ['File', 'Edit', 'View', 'Insert', 'Draw', 'AR Objects', 'Modify', 'Lay-out', 'Information', 'Extras', 'Settings', 'Window', 'Key combinations', '?'];
const BAR_1 = [
  '#', 'fileNew', 'open', 'save', 'print', 'preview', 'openRecent', 'saveTimed', '|', 'cut', 'copy', 'paste', '|', 'undo', 'redo', 'v',
  '#', 'plus', 'minus', '|', 'dupSel', 'dup', 'rotate', 'mirror', 'scale', 'group', '|', 'stretch', 'trim1', 'trim2', 'trim3', 'eraser', 'eraseSeg', 'v',
  '#', 'vPlain', 'vBottom', 'vLeft', 'vTop', 'vRight', 'vIso', 'pyramid', 'boxPrev', 'boxNext', 'camPrev', 'camNext', 'v',
  '#', 'wallCopy', 'cfgUp', 'cfgBrush', 'houseTurn', 'column', 'fillet', 'view3d', 'lamp', 'video', 'v',
];
const BAR_2 = ['#', 'cancel', '*pick', 'layers', 'area', 'poly', 'cfgPick', 'v', '#'];

const Tools = ({ items, w, h }) =>
  items.map((it, i) => {
    if (it === '#') return <Grip key={i} />;
    if (it === '|') return <Sep key={i} />;
    if (it === 'v') return <More key={i} aria-label="More tools"><TinyTri /></More>;
    const on = it[0] === '*';
    const n = on ? it.slice(1) : it;
    return <Slot key={i} $w={w} $h={h} $on={on} aria-label={n} aria-pressed={on}><Icon n={n} /></Slot>;
  });

/* ---------- panels ---------- */
const HeadRow = styled.div`
  display: flex;
  align-items: center;
  height: 41px;
  flex: none;
  padding-left: ${(p) => p.$pad}px;
  h2 { margin: 0; font-size: 22px; font-weight: 400; line-height: 32px; }
`;
const HeadDots = styled.span`
  flex: 1;
  height: 6px;
  margin: 0 3px 0 18px;
  ${dotPattern}
`;
const HeadBtn = styled.button`
  ${plainButton}
  width: 36px;
  height: 36px;
`;
const Head = ({ title, pad }) => (
  <HeadRow $pad={pad}>
    <h2>{title}</h2>
    <HeadDots />
    <HeadBtn aria-label={`${title} options`}><TinyTri w={18} h={10} /></HeadBtn>
    <HeadBtn aria-label={`Pin ${title}`}>
      <svg width="16" height="20" viewBox="0 0 16 20" aria-hidden="true"><path d="M4 11V1H12V11M9 2V11M1 12H15M8 12V19" fill="none" stroke="#717171" strokeWidth="2" /></svg>
    </HeadBtn>
    <HeadBtn aria-label={`Close ${title}`}>
      <svg width="16" height="16" viewBox="0 0 16 16" aria-hidden="true"><path d="M1 1L15 15M15 1L1 15" stroke="#717171" strokeWidth="3" /></svg>
    </HeadBtn>
  </HeadRow>
);

const Body = styled.div`
  display: flex;
  flex: 1;
  min-height: 0;
`;
const Main = styled.div`
  display: flex;
  flex-direction: column;
  flex: 1;
  min-width: 0;
`;
const Workspace = styled.div`
  display: flex;
  flex: 1;
  min-height: 0;
`;
const Left = styled.aside`
  display: flex;
  flex-direction: column;
  width: 352px;
  flex: none;
  border-right: 2px solid ${LINE};
`;
const ToolBox = styled.div`
  flex: 1;
  min-height: 0;
  overflow: hidden;
  background: ${PANEL};
  border: 1px solid ${LINE};
`;
const SearchRow = styled.label`
  display: flex;
  align-items: center;
  height: 52px;
  padding: 0 6px 0 12px;
  border-bottom: 2px solid ${LINE};
  box-shadow: inset 0 0 0 1px #fff;
  input {
    flex: 1;
    min-width: 0;
    border: 0;
    padding: 0;
    outline: 0;
    background: none;
    &::placeholder { color: #777; opacity: 1; }
  }
`;
const Group = styled.section`
  h3 {
    display: flex;
    align-items: center;
    margin: 0;
    height: 36px;
    padding-left: 8px;
    font-size: 22px;
    font-weight: 700;
  }
  h3 svg { width: 22px; }
`;
const Palette = styled.div`
  display: grid;
  grid-template-columns: repeat(5, 60px);
  padding: 8px 0 12px 8px;
`;
const Twist = ({ open }) => (
  <svg width="24" height="16" viewBox="0 0 24 16" preserveAspectRatio="xMinYMid slice" aria-hidden="true">
    {open ? <path d="M15 1V14H1Z" fill="#a5a5a5" /> : <path d="M3 1L12 8L3 15Z" fill="none" stroke="#a5a5a5" strokeWidth="1" />}
  </svg>
);
const GROUPS = [
  ['Auxiliary-lines', 'auxLine auxAngle auxPerp auxPar auxCross auxRings auxCircle auxTan auxArc'],
  ['Elements', 'line pline rect rect9 lshape penta rings circle circleTan circleArc pshape arc arcAngle ellipse spline cloud'],
  ['Construction parts', 'wall slab opening pillar beam roof roofEdge roofOpening hip rafters chimney window glass door niche stairs railing room roomSum roomBand'],
  ['Extended wall functions', ''],
  ['Extended roof functions', ''],
  ['Lay-out', 'text dims hatch detail label leader level levelPoint diameter radius arcDim angleDim endDim baseDim arrow'],
  ['Freeform', 'face extrudeOpen extrude revolveOpen revolve sweep loft surface views2 views4 boolean helix path3d project'],
  ['Terrain', ''],
  ['Renovation planning', ''],
  ['Camera', ''],
  ['Quantities', 'calc bookDb book areaM2 areaGreen roomCheck planCheck planErase'],
  ['BIM Tools', ''],
  ['3D Platforms', ''],
];

/* ---------- drawing area ---------- */
const Center = styled.main`
  display: flex;
  flex-direction: column;
  flex: 1;
  min-width: 0;
`;
const Canvas = styled.div`
  display: flex;
  flex: 1;
  min-height: 0;
  background: #fff;
  padding: 0 9.2% 0 9.1%;
`;
const Sheet = styled.div`
  position: relative;
  flex: 1;
  border: solid #000;
  border-width: 1px 1px 0;
`;
const Mark = styled.span`
  position: absolute;
  left: 23.8%;
  top: 0;
  width: 64px;
  height: 32px;
  border-top: 1px solid #000;
  background: linear-gradient(#000, #000) center / 1px 100% no-repeat;
`;
const TabStrip = styled.div`
  display: flex;
  height: 42px;
  flex: none;
  border-top: 1px solid ${LINE};
  border-bottom: 3px solid ${LINE};
`;
const DocTab = styled.div`
  position: relative;
  display: flex;
  align-items: center;
  height: 36px;
  margin-left: 37px;
  padding: 0 10px 0 17px;
  border: solid #999;
  border-width: 0 1px 1px 0;
  border-radius: 0 0 4px 0;
  font-size: 22px;
  font-weight: 700;
  color: #000;
  &::before {
    content: '';
    position: absolute;
    left: -19px;
    top: 0;
    width: 1px;
    height: 36px;
    background: #999;
    transform: skewX(45deg);
  }
  > button { ${plainButton} width: 18px; height: 24px; margin-left: 18px; }
  > span { margin-left: 17px; }
`;
const StripMenu = styled.button`
  ${plainButton}
  margin-left: auto;
  width: 32px;
`;
const Dock = styled.div`
  flex: none;
  display: grid;
  gap: 10px;
  padding: 8px 8px 12px 10px;
`;
const DockRow = styled.div`
  display: flex;
  align-items: center;
  gap: ${(p) => p.$gap || 0}px;
  height: ${(p) => p.$h}px;
`;
const Pair = styled.div`
  display: flex;
  gap: 9px;
`;
const Message = styled.div`
  flex: 1;
  height: 42px;
  background: #efefef;
  border: solid #fff;
  border-width: 2px 0 0 2px;
  border-bottom: 1px solid #888;
`;
const DOCK = 'viewCfg zoomWin zoomPrev zoomObj zoomAll walk goggles sheet origin printArea cubeDash cubeShade cubeLine cubeHidden cubeWire sphere *corner axisSmall axisOrigin axisWall axis3 axisPick axis2 axisSwap slice cubeGizmo axisArc tag grid *dText *dLead *dDim *dHatch'.split(' ');

/* ---------- right side ---------- */
const Right = styled.aside`
  display: flex;
  flex-direction: column;
  width: 442px;
  flex: none;
  border-left: 2px solid ${LINE};
`;
const PanelTools = styled.div`
  display: flex;
  align-items: center;
  height: ${(p) => p.$h}px;
  flex: none;
`;
const StoreyArea = styled.div`
  height: 485px;
  flex: none;
  background: #fff;
`;
const StoreyTable = styled.table`
  border-collapse: collapse;
  height: 100%;
  td, th {
    width: 66px;
    padding: 0 4px 0 0;
    text-align: center;
    font-weight: 400;
    border-right: 2px solid #d0d0d4;
    vertical-align: middle;
  }
  th { height: 52px; background: ${CHROME}; border-bottom: 1px solid #c0c0c4; }
  tbody td { height: 40px; color: #000; }
  tbody tr:last-child td { height: auto; }
  svg { margin: auto; }
`;
const TabRow = styled.div`
  display: flex;
  height: ${(p) => p.$h}px;
  flex: none;
  border-top: 1px solid ${LINE};
`;
const PanelTab = styled.button`
  ${plainButton}
  justify-content: flex-start;
  flex: ${(p) => p.$w} 0 0;
  gap: ${(p) => p.$gap}px;
  padding-left: 7px;
  font-size: 22px;
  color: ${(p) => (p.$on ? '#0e70c0' : '#1e1e1e')};
  background: ${(p) => (p.$on ? PANEL : 'none')};
  border: solid ${(p) => (p.$on ? LINE : 'transparent')};
  border-width: 0 1px 1px;
`;
const Rule = styled.hr`
  margin: 0;
  border: 0;
  height: 3px;
  flex: none;
  background: ${LINE};
`;
const TreeFrame = styled.div`
  display: grid;
  grid-template: minmax(0, 1fr) 34px / minmax(0, 1fr) 34px;
  flex: 1;
  min-height: 0;
  border: 1px solid #646464;
  background: #efefef;
`;
const LayerList = styled.ul`
  overflow: hidden;
  background: #fff;
  color: #000;
`;
const LayerRow = styled.li`
  display: flex;
  align-items: center;
  height: 36px;
  padding-left: ${(p) => (p.$root ? 0 : 48)}px;
  background: ${(p) => (p.$root ? CHROME : 'none')};
  font-weight: ${(p) => (p.$root || p.$on ? 700 : 400)};
  font-size: ${(p) => (p.$root || p.$on ? 22 : 23)}px;
  color: ${(p) => (p.$on ? B : 'inherit')};
  svg { width: 34px; flex: none; }
  svg:first-child { width: ${(p) => (p.$root ? 32 : 34)}px; }
  span { padding-left: 4px; }
`;
const Track = styled.div`
  display: flex;
  padding: ${(p) => (p.$h ? '7px 0 7px 34px' : '34px 7px 0')};
`;
const Thumb = styled.div`
  background: #858585;
  width: ${(p) => (p.$h ? '84%' : '100%')};
  height: ${(p) => (p.$h ? '100%' : '61%')};
`;
const Plane = ({ on }) => (
  <svg width="34" height="24" viewBox="0 0 34 24" fill="none" aria-hidden="true">
    <path d="M4 3H17L30 21H17Z" fill={on ? '#6f9ade' : G1} stroke={on ? K : '#b5b5b5'} strokeWidth="1.5" />
    {on && <path d="M20 10L30 -1" stroke={Y2} strokeWidth="4" />}
  </svg>
);
const FlatPlane = () => (
  <svg width="34" height="24" viewBox="0 0 34 24" fill="none" aria-hidden="true">
    <path d="M3 14H23L32 23H12Z" fill={G1} stroke="#b5b5b5" strokeWidth="1.5" />
  </svg>
);
const Eye = () => (
  <svg width="34" height="24" viewBox="0 0 34 24" fill="none" aria-hidden="true">
    <path d="M4 12Q17 -2 30 12Q17 26 4 12Z" fill="#fff" stroke={K} strokeWidth="1.6" />
    <circle cx="17" cy="12" r="5.5" stroke={K} strokeWidth="1.5" /><circle cx="17" cy="12" r="3" fill={K} />
  </svg>
);
const Lock = () => (
  <svg width="34" height="24" viewBox="0 0 34 24" fill="none" aria-hidden="true">
    <path d="M18 10V5Q18 1 22 1Q26 1 26 5V9" stroke={K} strokeWidth="1.6" />
    <path d="M7 10H20V21H7Z" fill="#b3dca4" stroke={K} strokeWidth="1.6" />
  </svg>
);
const LAYERS = ['Terrain', 'Wall', 'Column', 'Girder', 'Slab', 'Roof', 'Wood construct', 'Steel construct', 'Chimney', 'Stair', 'Window', 'Int. glass elements', 'Door', 'Room', 'Naming', 'Dimensioning', 'Furniture', 'Equipment', 'Kitchen', 'Struct.parts', 'Constr_part', 'Plan graphic', 'Symbol', 'Function'];
const FilterBox = styled.div`
  height: 86px;
  flex: none;
  background: #fff;
  border: 1px solid #646464;
`;
const FilterMenu = styled.button`
  ${plainButton}
  margin: 0 7px 14px auto;
  width: 24px;
  height: 24px;
`;

const Rail = styled.nav`
  width: 70px;
  flex: none;
  padding-top: 7px;
  display: flex;
  flex-direction: column;
  gap: 13px;
`;
const RailTab = styled.button`
  ${plainButton}
  flex-direction: column;
  gap: 6px;
  padding-right: 8px;
  border-right: 6px solid ${LINE};
  span { writing-mode: vertical-rl; font-size: 22px; line-height: 32px; }
`;

const Status = styled.footer`
  display: flex;
  align-items: center;
  height: 37px;
  flex: none;
  padding-left: 5px;
  background: #007acc;
  color: #fff;
  font-size: 22px;
  overflow: hidden;
  white-space: nowrap;
`;
const Cell = styled.span`
  width: ${(p) => p.$w}px;
  flex: none;
  color: ${(p) => (p.$dim ? '#5eb2ee' : '#fff')};
`;

/* ---------- dialog ---------- */
const Layer = styled.div`
  position: fixed;
  inset: 0;
  display: flex;
  align-items: center;
  justify-content: center;
  padding-bottom: 12px;
`;
const Dialog = styled.section`
  display: flex;
  flex-direction: column;
  width: 1275px;
  height: 824px;
  background: #fff;
  border: 2px solid #0063a5;
  border-radius: 16px;
  overflow: hidden;
  color: #000;
  box-shadow: 0 60px 80px rgba(0, 0, 0, 0.32), 0 0 50px rgba(0, 0, 0, 0.22);
`;
const DialogHead = styled.div`
  display: flex;
  align-items: center;
  justify-content: space-between;
  height: 56px;
  flex: none;
  padding: 0 10px 0 13px;
  h2 { margin: 0; font-size: 23px; font-weight: 400; line-height: 32px; }
  button { ${plainButton} width: 46px; height: 46px; }
`;
const DialogBody = styled.div`
  display: grid;
  grid-template-columns: 439px minmax(0, 1fr);
  flex: 1;
  background: #f0f0f0;
`;
const Tree = styled.ul`
  position: relative;
  background: #fff;
  border: 1px solid #828790;
  border-left: 0;
  margin-bottom: 4px;
  padding-top: 2px;
  &::before {
    content: '';
    position: absolute;
    left: 28px;
    top: 26px;
    height: 432px;
    border-left: 1px dotted #888;
  }
`;
const TreeRow = styled.div`
  position: relative;
  display: flex;
  align-items: center;
  height: 48px;
  padding-left: ${(p) => (p.$child ? 79 : 19)}px;
  > i {
    width: ${(p) => (p.$child ? 28 : 18)}px;
    border-top: 1px dotted #888;
  }
  > span {
    padding: 0 3px;
    line-height: 48px;
    margin-left: ${(p) => (p.$child ? 3 : 6)}px;
    background: ${(p) => (p.$on ? '#0078d7' : 'none')};
    color: ${(p) => (p.$on ? '#fff' : 'inherit')};
  }
`;
const SubTree = styled.ul`
  position: relative;
  &::before {
    content: '';
    position: absolute;
    left: 79px;
    top: 0;
    bottom: 24px;
    border-left: 1px dotted #888;
  }
`;
const Expander = styled.button`
  ${plainButton}
  width: 18px;
  height: 18px;
  border: 1px solid #919191;
  background: #f8f8f8;
`;
const Pane = styled.form`
  display: flex;
  flex-direction: column;
  padding: 15px 28px 13px 9px;
`;
const Box = styled.fieldset`
  margin: 0 0 0 21px;
  padding: 0 8px 0 34px;
  border: 1px solid #dcdcdc;
  min-width: 0;
  legend { margin-left: -27px; padding: 0 2px; height: 30px; line-height: 30px; }
`;
const Field = styled.div`
  display: grid;
  grid-template-columns: 316px 1fr;
  align-items: center;
  height: ${(p) => p.$h}px;
  margin-top: ${(p) => p.$mt || 0}px;
  label { padding-top: ${(p) => (p.$low ? 10 : 0)}px; }
`;
const WinSelect = styled.span`
  display: grid;
  width: ${(p) => p.$w || '100%'};
  height: 40px;
  background: #fdfdfd;
  border: 1px solid #d0d0d0;
  select {
    grid-area: 1 / 1;
    appearance: none;
    border: 0;
    outline: 0;
    background: none;
    padding: 0 4px;
  }
  svg { grid-area: 1 / 1; place-self: center end; margin-right: 8px; pointer-events: none; }
`;
const NumberBox = styled.input`
  width: 100px;
  height: 50px;
  margin-left: 166px;
  padding: 0 9px 10px;
  border: 1px solid #e5e5e5;
  border-bottom: 1px solid #868686;
  background: #fff;
  outline: 0;
`;
const CheckLine = styled.label`
  display: flex;
  align-items: center;
  gap: 6px;
  height: ${(p) => p.$h || 48}px;
  margin-top: ${(p) => p.$mt || 0}px;
  margin-left: ${(p) => p.$ml || 0}px;
  input {
    appearance: none;
    display: grid;
    place-items: center;
    width: 26px;
    height: 26px;
    margin: 0;
    border: 1px solid #777;
    border-radius: 6px;
    background: #f8f8f8;
    &:checked { background: #005fb8; border-color: #005fb8; }
    &:checked::after {
      content: '';
      width: 12px;
      height: 7px;
      margin-top: -4px;
      border: solid #fff;
      border-width: 0 0 2px 2px;
      transform: rotate(-45deg);
    }
  }
`;
const Check = ({ children, on, ...rest }) => (
  <CheckLine {...rest}><input type="checkbox" defaultChecked={on} />{children}</CheckLine>
);
const Footer = styled.div`
  display: flex;
  align-items: center;
  gap: 8px;
  margin-top: auto;
  padding-right: 3px;
  > label { margin-right: auto; }
`;
const Push = styled.button`
  width: 161px;
  height: 54px;
  border: 1px solid #d0d0d0;
  border-radius: 5px;
  background: #fdfdfd;
`;
const Down = () => (
  <svg width="14" height="8" viewBox="0 0 14 8" aria-hidden="true"><path d="M1 1L7 7L13 1" fill="none" stroke="#777" strokeWidth="1.5" /></svg>
);
const Sign = ({ plus }) => (
  <svg width="10" height="10" viewBox="0 0 10 10" aria-hidden="true"><path d={plus ? 'M0 5H10M5 0V10' : 'M0 5H10'} stroke="#3f5fa8" strokeWidth="2" /></svg>
);

function OptionsDialog({ onClose }) {
  return (
    <Layer>
      <Dialog role="dialog" aria-labelledby="options-title">
        <DialogHead>
          <h2 id="options-title">Options - System - User interface</h2>
          <button type="button" aria-label="Close" onClick={onClose}>
            <svg width="22" height="22" viewBox="0 0 22 22" aria-hidden="true"><path d="M1 1L21 21M21 1L1 21" stroke="#111" strokeWidth="2" /></svg>
          </button>
        </DialogHead>
        <DialogBody>
          <Tree>
            <li>
              <TreeRow><Expander aria-label="Collapse System"><Sign /></Expander><i /><Icon n="folderBig" s={44} /><span>System</span></TreeRow>
              <SubTree>
                {[['config', 'Configuration'], ['gear', 'General'], ['screen', 'User interface'], ['tips', 'Tooltips/Help'], ['globe', 'Region']].map(([n, t]) => (
                  <li key={t}><TreeRow $child $on={t === 'User interface'}><i /><Icon n={n} s={46} /><span>{t}</span></TreeRow></li>
                ))}
              </SubTree>
            </li>
            {['Save/Load', 'Work parameters', 'Depiction', 'Views'].map((t) => (
              <li key={t}><TreeRow><Expander aria-label={`Expand ${t}`}><Sign plus /></Expander><i /><Icon n="folder" s={44} /><span>{t}</span></TreeRow></li>
            ))}
          </Tree>
          <Pane onSubmit={(e) => e.preventDefault()}>
            <Box>
              <legend>User interface general</legend>
              <Field $h={40} $low>
                <label htmlFor="view-layout">View layout</label>
                <WinSelect><select id="view-layout"><option>Tabbed views</option></select><Down /></WinSelect>
              </Field>
              <Field $h={50} $mt={25}>
                <label htmlFor="max-views">Maximal opened views</label>
                <NumberBox id="max-views" defaultValue="16" />
              </Field>
              <Check $mt={5}>Always show new views in new windows</Check>
              <Check on>Colourise tabs by view type</Check>
              <Field $h={40} $mt={12} $low>
                <label htmlFor="ui-design">User interface design</label>
                <WinSelect $w="267px"><select id="ui-design"><option>Technical - light</option></select><Down /></WinSelect>
              </Field>
              <Check $h={44} $mt={10} $ml={316}>Also in dialog windows</Check>
              <Check>Use scroll bar for graphic window</Check>
              <Check on>Show notifications as info balloon</Check>
              <Check on>Show welcome screen at startup</Check>
            </Box>
            <Footer>
              <Check on>Extended</Check>
              <Push>OK</Push><Push>Cancel</Push><Push>Help</Push>
            </Footer>
          </Pane>
        </DialogBody>
      </Dialog>
    </Layer>
  );
}

function BuildingSmall() {
  return (
    <svg width="30" height="30" viewBox="0 0 30 30" fill="none" aria-hidden="true">
      <path d="M3 3H22L27 7V28H7L3 23ZM3 3L7 7H27M7 7V28M7 14H27M7 21H27" fill={G1} stroke="#b5b5b5" strokeWidth="1.5" />
    </svg>
  );
}

export default function App() {
  const [dialog, setDialog] = useState(true);
  return (
    <App_>
      <Global />
      <TitleBar>
        <Logo viewBox="0 0 32 32" $s={32} $gap={40} aria-hidden="true">
          <rect width="32" height="32" fill="#8a9784" />
          <path d="M24 3H3V29H29V12" fill="none" stroke="#e8ece5" strokeWidth="1.5" />
          <path d="M26 2l4 2v6l-4 2-4-2v-6zl4 4 4-4M22 8l4 4 4-4" fill="none" stroke="#c6cec0" />
          <text x="10" y="23" fontSize="16" fill="#fff">A</text>
        </Logo>
        <Logo viewBox="0 0 32 32" $s={32} $gap={28} aria-hidden="true">
          <rect width="32" height="32" fill="#d9d9d9" />
          <path d="M16 3L27 8V24L16 29L5 24V8ZM5 9L16 15L27 9M5 16L16 22L27 16M5 22L16 28" fill="none" stroke="#d5372c" strokeWidth="2" />
        </Logo>
        <Title>{'Proj:<CAD_Object4> Struct:<House>  Storey:<GF>  File:<unnamed.d> ELITECAD - [Design model]'}</Title>
        <AskBox>
          <svg width="30" height="32" viewBox="0 0 30 32" aria-hidden="true"><path d="M14 19L2 30" stroke="#717171" strokeWidth="4" /><circle cx="18" cy="12" r="10" fill="#fff" stroke="#717171" strokeWidth="2" /></svg>
          <input aria-label="What would you like to do?" placeholder="What would you like to do?" />
        </AskBox>
        <WinButton $w={56} aria-label="Notifications">
          <svg width="54" height="40" viewBox="0 0 54 40" aria-hidden="true">
            <circle cx="16" cy="19" r="14" fill="#fff" stroke="#444" strokeWidth="1.5" />
            <circle cx="16" cy="12" r="2.4" fill={B} /><path d="M16 16V28" stroke={B} strokeWidth="4" />
            <circle cx="39" cy="28" r="10" fill="#a05ad0" />
            <text x="34" y="35" fontSize="18" fill="#fff">1</text>
          </svg>
        </WinButton>
        <WinButton aria-label="Minimise"><svg width="12" height="20" aria-hidden="true"><path d="M0 16H12" stroke="#c0c0c0" strokeWidth="4" /></svg></WinButton>
        <WinButton aria-label="Restore"><svg width="16" height="18" viewBox="0 0 16 18" aria-hidden="true"><path d="M5 5V2H15V11H11M1 8H10V17H1Z" fill="none" stroke="#c0c0c0" strokeWidth="2.5" /></svg></WinButton>
        <WinButton $w={68} aria-label="Close window"><svg width="16" height="16" viewBox="0 0 16 16" aria-hidden="true"><path d="M1 1L15 15M15 1L1 15" stroke="#c0c0c0" strokeWidth="3" /></svg></WinButton>
      </TitleBar>
      <Bar $h={62}>
        <Grip />
        <MenuList>{MENUS.map((m) => <MenuItem key={m}>{m}</MenuItem>)}</MenuList>
      </Bar>
      <Bar $h={62}><Tools items={BAR_1} /></Bar>
      <Bar $h={65}>
        <Tools items={BAR_2} />
        <Spring $g={2110} />
        <Grip /><Slot $w={64} aria-label="Layers"><Icon n="layers" /></Slot>
        <Combo label="Active layer" value="Terrain" w={308} />
        <Spring $g={42} /><Grip /><Spring $g={890} />
      </Bar>

      <Body>
        <Main>
          <Workspace>
            <Left>
              <Head title="Tools" pad={5} />
              <ToolBox>
                <SearchRow>
                  <input type="search" aria-label="Search tools" placeholder="Search" />
                  <svg width="30" height="30" viewBox="0 0 30 30" aria-hidden="true"><path d="M12 17L1 28" stroke="#0e8fe8" strokeWidth="4" /><circle cx="18" cy="11" r="9.5" fill="none" stroke="#0e8fe8" strokeWidth="2" /></svg>
                </SearchRow>
                {GROUPS.map(([name, icons]) => (
                  <Group key={name}>
                    <h3><Twist open={!!icons} />{name}</h3>
                    {icons && (
                      <Palette>
                        {icons.split(' ').map((n) => <Slot key={n} $w={60} aria-label={n}><Icon n={n} /></Slot>)}
                      </Palette>
                    )}
                  </Group>
                ))}
              </ToolBox>
            </Left>

            <Center>
              <Canvas><Sheet><Mark /></Sheet></Canvas>
              <TabStrip>
                <DocTab>
                  <Icon n="model" s={32} /><span>Design model</span>
                  <button aria-label="Close Design model"><svg width="16" height="16" viewBox="0 0 16 16" aria-hidden="true"><path d="M1 1L15 15M15 1L1 15" stroke="#717171" strokeWidth="3" /></svg></button>
                </DocTab>
                <StripMenu aria-label="Open tabs"><TinyTri w={17} h={9} /></StripMenu>
              </TabStrip>
              <Dock>
                <DockRow $h={55}>
                  <Tools items={DOCK} w={55} h={54} />
                  <Spring />
                  <Slot $w={62} aria-label="Construction project"><Icon n="cut3" /></Slot>
                  <Pair>
                    <Combo label="Project type" value="Construction project" w={384} />
                    <Combo label="Restriction" value="No restriction" w={385} off />
                  </Pair>
                </DockRow>
                <DockRow $h={42} $gap={8}>
                  <Message role="status" />
                  <Combo label="Scale" value="1:100" w={331} />
                  <Combo label="Unit" value="cm" w={248} />
                  <Combo label="Format" value="A3" w={249} />
                </DockRow>
              </Dock>
            </Center>

            <Right>
              <Head title="Storey" pad={10} />
              <PanelTools $h={66}>
                <Slot $w={64} aria-label="Storey book"><Icon n="storeyBook" /></Slot>
                <Slot $w={65} aria-label="Storey settings"><Icon n="storeyCfg" /></Slot>
                <Slot $w={65} aria-label="Storey up"><Icon n="storeyUp" /></Slot>
                <Sep $h={36} $m={1} $c="#fff" />
                <Slot $w={65} aria-label="Storey list"><Icon n="storeyList" /></Slot>
                <Slot $w={65} aria-label="Storey tree"><Icon n="storeyTree" /></Slot>
                <Sep $h={36} $m={1} $c="#fff" />
                <Slot $w={65} aria-label="Invert"><Icon n="contrast" /></Slot>
              </PanelTools>
              <StoreyArea>
                <StoreyTable>
                  <thead><tr><th aria-label="Plane"><FlatPlane /></th><th aria-label="Building"><BuildingSmall /></th></tr></thead>
                  <tbody>
                    <tr><td /><td><FlatPlane /></td></tr>
                    <tr><td>1</td><td><Icon n="storeyDim" s={30} /></td></tr>
                    <tr><td>0</td><td><Icon n="storeyActive" s={30} /></td></tr>
                    <tr><td>-1</td><td><Icon n="storeyDim" s={30} /></td></tr>
                    <tr><td /><td /></tr>
                  </tbody>
                </StoreyTable>
              </StoreyArea>
              <TabRow $h={55}>
                <PanelTab $w={141} $gap={17} $on><Icon n="storey" s={42} />Storey</PanelTab>
                <PanelTab $w={146} $gap={10}><Icon n="dimensions" s={44} />Dime...</PanelTab>
                <PanelTab $w={152} $gap={10}><Icon n="workAxes" s={44} />Work ...</PanelTab>
              </TabRow>
              <Rule />
              <Head title="Layer" pad={10} />
              <PanelTools $h={67}>
                <Slot $w={68} aria-label="New layer group"><Icon n="layerNew" s={46} /></Slot>
                <Slot $w={62} aria-label="New layer"><Icon n="planeNew" s={46} /></Slot>
                <Sep $h={36} $m={1} $c="#fff" />
                <Slot $w={66} aria-label="Invert layers"><Icon n="contrast" /></Slot>
                <Sep $h={36} $m={1} $c="#fff" />
                <Slot $w={66} aria-label="Layer sets"><Icon n="server" /></Slot>
                <Slot $w={64} aria-label="Sort layers"><Icon n="sortAZ" /></Slot>
                <HeadBtn aria-label="More layer tools"><TinyTri w={10} h={6} c="#000" /></HeadBtn>
              </PanelTools>
              <TreeFrame>
                <LayerList>
                  <LayerRow $root>
                    <svg height="24" viewBox="0 0 32 24" fill="none" aria-hidden="true"><path d="M9 8L16 15L23 8" stroke="#111" strokeWidth="3" /></svg>
                    <svg height="32" viewBox="0 0 34 32" fill="none" aria-hidden="true"><path d="M9 2H23V14L26 18V25H18" fill={Y2} stroke={K} strokeWidth="1.4" /><path d="M8 2L19 6V30L8 26Z" fill={Y1} stroke={K} strokeWidth="1.4" /></svg>
                    <Eye /><Lock /><span>Design</span>
                  </LayerRow>
                  {LAYERS.map((n, i) => (
                    <LayerRow key={n} $on={i === 0}><Plane on={i === 0} /><Eye /><Lock /><span>{n}</span></LayerRow>
                  ))}
                </LayerList>
                <Track><Thumb /></Track>
                <Track $h><Thumb $h /></Track>
              </TreeFrame>
              <PanelTools $h={76}>
                <Slot $w={66} aria-label="New filter"><Icon n="filterNew" s={46} /></Slot>
                <Slot $w={62} aria-label="Delete filter"><Icon n="remove" s={46} /></Slot>
                <FilterMenu aria-label="Filter options"><TinyTri w={20} h={11} c={K} /></FilterMenu>
              </PanelTools>
              <FilterBox />
              <TabRow $h={55}>
                {['plot', 'layers', 'library', 'materials', 'ball'].map((n) => (
                  <PanelTab key={n} $w={87} $gap={10} $on={n === 'layers'} aria-label={n}><Icon n={n} s={48} />...</PanelTab>
                ))}
              </TabRow>
            </Right>
          </Workspace>
          <Status>
            <span>Ready</span>
            <Spring />
            <Cell $w={105}>Z-10</Cell>
            <Cell $w={167}>GPU 9.0GB free</Cell>
            <Cell $w={60}>NUM</Cell>
            <Cell $w={28} $dim>UF</Cell>
          </Status>
        </Main>
        <Rail>
          <RailTab><Icon n="infoWin" s={46} /><span>Info window</span></RailTab>
          <RailTab><Icon n="props" s={46} /><span>Properties</span></RailTab>
        </Rail>
      </Body>
      {dialog && <OptionsDialog onClose={() => setDialog(false)} />}
    </App_>
  );
}
